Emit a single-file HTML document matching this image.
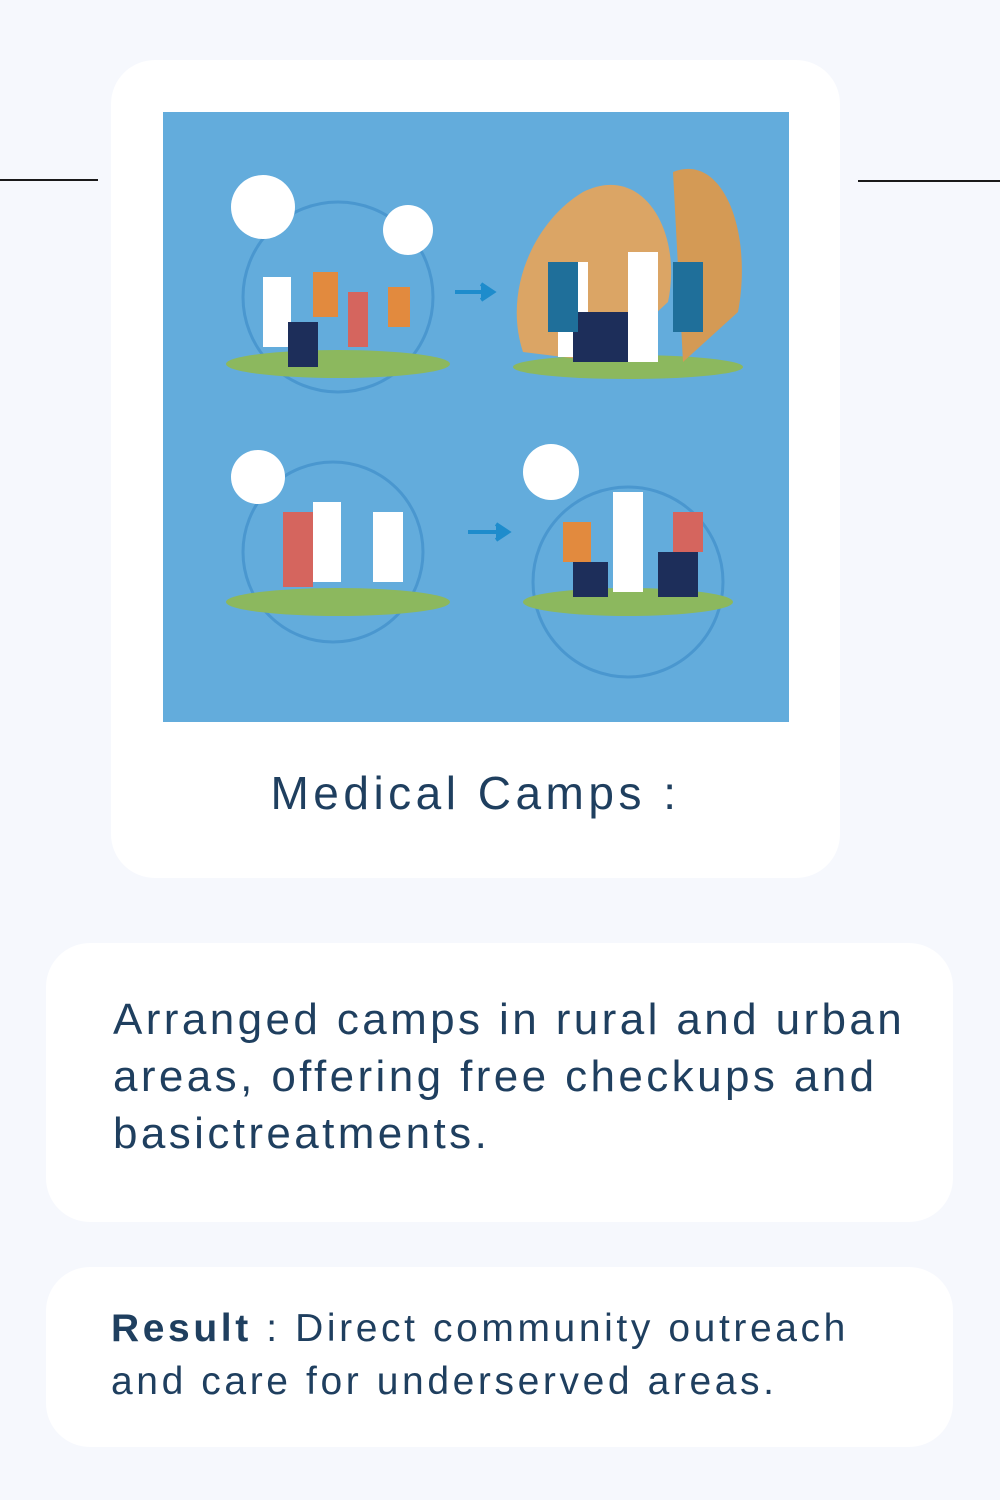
<!DOCTYPE html>
<html><head><meta charset="utf-8"><style>
*{margin:0;padding:0;box-sizing:border-box}
body{width:1000px;height:1500px;background:#f6f8fd;position:relative;overflow:hidden;font-family:"Liberation Sans",sans-serif;color:#1f3f5f}
.line{position:absolute;height:2px;background:#1a1a1a}
.card{position:absolute;background:#fff;border-radius:44px}
.img{position:absolute;left:163px;top:112px;width:626px;height:610px;background:#63acdc}
.title{position:absolute;left:111px;width:729px;top:766px;text-align:center;font-size:46px;letter-spacing:4.5px}
.p{position:absolute;font-size:44px;letter-spacing:3.4px;line-height:57px;white-space:nowrap}
</style></head><body>
<div class="line" style="left:0;top:179px;width:98px"></div>
<div class="line" style="left:858px;top:180px;width:142px"></div>
<div class="card" style="left:111px;top:60px;width:729px;height:818px"></div>
<div class="img">
<svg width="626" height="610" viewBox="0 0 626 610">
<g fill="none" stroke="#4a97cf" stroke-width="3">
<circle cx="175" cy="185" r="95"/><circle cx="465" cy="470" r="95"/><circle cx="170" cy="440" r="90"/>
</g>
<ellipse cx="175" cy="252" rx="112" ry="14" fill="#8cb85e"/>
<ellipse cx="465" cy="255" rx="115" ry="12" fill="#8cb85e"/>
<ellipse cx="175" cy="490" rx="112" ry="14" fill="#8cb85e"/>
<ellipse cx="465" cy="490" rx="105" ry="14" fill="#8cb85e"/>
<path d="M510 60 C560 40 590 120 575 200 L520 250 Z" fill="#d49a55"/>
<path d="M420 80 C480 50 520 120 505 190 L440 250 L360 240 C340 180 370 110 420 80Z" fill="#dba565"/>
<circle cx="100" cy="95" r="32" fill="#fff"/><circle cx="245" cy="118" r="25" fill="#fff"/>
<circle cx="95" cy="365" r="27" fill="#fff"/><circle cx="388" cy="360" r="28" fill="#fff"/>
<path d="M292 180 H325 M318 172 L330 180 L318 188" stroke="#1e8ccc" stroke-width="4" fill="#1e8ccc"/>
<path d="M305 420 H340 M333 412 L345 420 L333 428" stroke="#1e8ccc" stroke-width="4" fill="#1e8ccc"/>
<g fill="#fff"><rect x="100" y="165" width="28" height="70"/><rect x="395" y="150" width="30" height="95"/><rect x="465" y="140" width="30" height="110"/><rect x="150" y="390" width="28" height="80"/><rect x="210" y="400" width="30" height="70"/><rect x="450" y="380" width="30" height="100"/></g>
<g fill="#e28a3e"><rect x="150" y="160" width="25" height="45"/><rect x="225" y="175" width="22" height="40"/><rect x="400" y="410" width="28" height="40"/></g>
<g fill="#d5655e"><rect x="185" y="180" width="20" height="55"/><rect x="120" y="400" width="30" height="75"/><rect x="510" y="400" width="30" height="40"/></g>
<g fill="#1d2e5a"><rect x="410" y="200" width="55" height="50"/><rect x="125" y="210" width="30" height="45"/><rect x="495" y="440" width="40" height="45"/><rect x="410" y="450" width="35" height="35"/></g>
<g fill="#1f6f9a"><rect x="385" y="150" width="30" height="70"/><rect x="510" y="150" width="30" height="70"/></g>
</svg>
</div>
<div class="title">Medical Camps :</div>
<div class="card" style="left:46px;top:943px;width:907px;height:279px"></div>
<div class="p" style="left:113px;top:991px">Arranged camps in rural and urban<br>areas, offering free checkups and<br>basictreatments.</div>
<div class="card" style="left:46px;top:1267px;width:907px;height:180px"></div>
<div class="p" style="left:111px;top:1302px;font-size:39px;line-height:53px;letter-spacing:3.6px"><b>Result</b> : Direct community outreach<br>and care for underserved areas.</div>
</body></html>
